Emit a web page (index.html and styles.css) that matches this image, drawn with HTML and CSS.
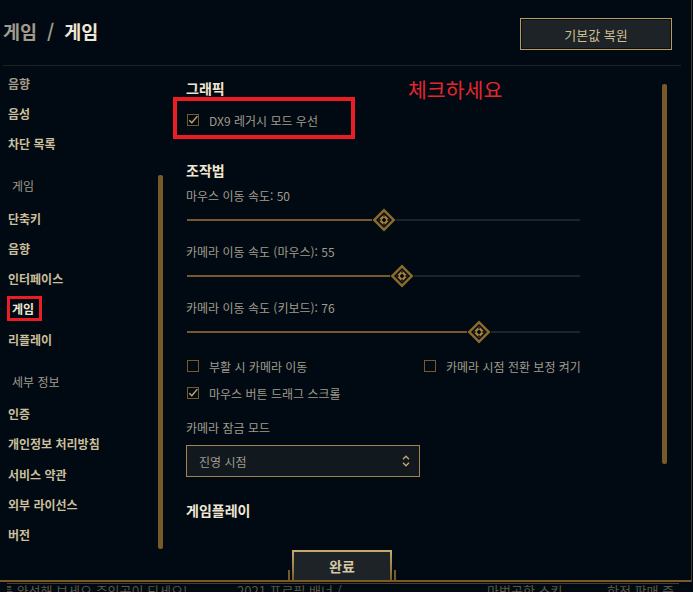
FILE: index.html
```html
<!DOCTYPE html>
<html lang="ko">
<head>
<meta charset="utf-8">
<title>게임 설정</title>
<link rel="stylesheet" href="styles.css">
</head>
<body>
<div class="app">
  <header class="top">
    <h1 class="title"><span class="crumb">게임</span><span class="sep">/</span><span class="cur">게임</span></h1>
    <button class="btn-reset">기본값 복원</button>
  </header>
  <div class="main">
    <aside class="side">
      <nav class="nav">
        <div class="nav-item dim">음향</div>
        <div class="nav-item">음성</div>
        <div class="nav-item">차단 목록</div>
        <div class="nav-head">게임</div>
        <div class="nav-item">단축키</div>
        <div class="nav-item">음향</div>
        <div class="nav-item">인터페이스</div>
        <div class="nav-item"><span class="active-mark">게임</span></div>
        <div class="nav-item">리플레이</div>
        <div class="nav-head">세부 정보</div>
        <div class="nav-item">인증</div>
        <div class="nav-item">개인정보 처리방침</div>
        <div class="nav-item">서비스 약관</div>
        <div class="nav-item">외부 라이선스</div>
        <div class="nav-item">버전</div>
      </nav>
      <div class="side-thumb"></div>
    </aside>
    <section class="content">
      <div class="panel">
        <h2 class="h2 first">그래픽</h2>
        <span class="note">체크하세요</span>
        <div class="check-row dx9">
          <label class="check"><span class="box on"><svg viewBox="0 0 12 12" width="12" height="12"><path d="M2.3 6.2 L4.8 8.7 L10.4 2.1" fill="none" stroke="#c8aa6e" stroke-width="1.4"/></svg></span>DX9 레거시 모드 우선</label>
          <span class="note-box"></span>
        </div>

        <h2 class="h2 ctrl">조작법</h2>
        <div class="label first-label">마우스 이동 속도: 50</div>
        <div class="slider" style="--v:50">
          <span class="fill"></span>
          <svg class="knob" viewBox="0 0 24 24" width="24" height="24"><polygon points="12,0.5 23.5,12 12,23.5 0.5,12" fill="#8c6a2c"/><polygon points="12,4 20,12 12,20 4,12" fill="#010a13"/><polygon points="12,6.3 17.7,12 12,17.7 6.3,12" fill="#a8823c"/><polygon points="12,9.6 14.4,12 12,14.4 9.6,12" fill="#010a13"/><circle cx="12" cy="7.8" r="0.9" fill="#010a13"/><circle cx="16.2" cy="12" r="0.9" fill="#010a13"/><circle cx="12" cy="16.2" r="0.9" fill="#010a13"/><circle cx="7.8" cy="12" r="0.9" fill="#010a13"/></svg>
          <span class="rest"></span>
        </div>
        <div class="label">카메라 이동 속도 (마우스): 55</div>
        <div class="slider" style="--v:55">
          <span class="fill"></span>
          <svg class="knob" viewBox="0 0 24 24" width="24" height="24"><polygon points="12,0.5 23.5,12 12,23.5 0.5,12" fill="#8c6a2c"/><polygon points="12,4 20,12 12,20 4,12" fill="#010a13"/><polygon points="12,6.3 17.7,12 12,17.7 6.3,12" fill="#a8823c"/><polygon points="12,9.6 14.4,12 12,14.4 9.6,12" fill="#010a13"/><circle cx="12" cy="7.8" r="0.9" fill="#010a13"/><circle cx="16.2" cy="12" r="0.9" fill="#010a13"/><circle cx="12" cy="16.2" r="0.9" fill="#010a13"/><circle cx="7.8" cy="12" r="0.9" fill="#010a13"/></svg>
          <span class="rest"></span>
        </div>
        <div class="label">카메라 이동 속도 (키보드): 76</div>
        <div class="slider" style="--v:76">
          <span class="fill"></span>
          <svg class="knob" viewBox="0 0 24 24" width="24" height="24"><polygon points="12,0.5 23.5,12 12,23.5 0.5,12" fill="#8c6a2c"/><polygon points="12,4 20,12 12,20 4,12" fill="#010a13"/><polygon points="12,6.3 17.7,12 12,17.7 6.3,12" fill="#a8823c"/><polygon points="12,9.6 14.4,12 12,14.4 9.6,12" fill="#010a13"/><circle cx="12" cy="7.8" r="0.9" fill="#010a13"/><circle cx="16.2" cy="12" r="0.9" fill="#010a13"/><circle cx="12" cy="16.2" r="0.9" fill="#010a13"/><circle cx="7.8" cy="12" r="0.9" fill="#010a13"/></svg>
          <span class="rest"></span>
        </div>

        <div class="check-grid">
          <label class="check"><span class="box"></span>부활 시 카메라 이동</label>
          <label class="check"><span class="box"></span>카메라 시점 전환 보정 켜기</label>
        </div>
        <div class="check-row second">
          <label class="check"><span class="box on"><svg viewBox="0 0 12 12" width="12" height="12"><path d="M2.3 6.2 L4.8 8.7 L10.4 2.1" fill="none" stroke="#c8aa6e" stroke-width="1.4"/></svg></span>마우스 버튼 드래그 스크롤</label>
        </div>

        <div class="label lock-label">카메라 잠금 모드</div>
        <div class="select">
          <span>진영 시점</span>
          <svg viewBox="0 0 8 12" width="8" height="12"><path d="M1 4.2 L4 1.2 L7 4.2 M1 7.8 L4 10.8 L7 7.8" fill="none" stroke="#c8aa6e" stroke-width="1.3"/></svg>
        </div>

        <h2 class="h2 gameplay">게임플레이</h2>
      </div>
      <div class="content-thumb"></div>
    </section>
  </div>
  <footer class="foot">
    <div class="done-wrap"><button class="btn-done">완료</button></div>
  </footer>
</div>
<div class="behind">
  <span class="b1">를 완성해 보세요 주인공이 되세요!</span>
  <span class="b2">2021 프로필 배너 /</span>
  <span class="b3">마법공학 스킨</span>
  <span class="b4">한정 판매 중</span>
</div>
</body>
</html>
```

FILE: styles.css
```css
* { box-sizing: border-box; }
html, body { margin: 0; padding: 0; }
body {
  background: #010a13;
  width: 693px;
  height: 592px;
  overflow: hidden;
  font-family: "Noto Sans CJK KR", "Noto Sans", sans-serif;
}

.app {
  width: 692px;
  height: 582px;
  border-right: 1px solid #4a3a1a;
  border-bottom: 2px solid #785a28;
  display: flex;
  flex-direction: column;
}

/* header */
.top {
  flex: none;
  height: 66px;
  margin: 0 10px 0 3px;
  border-bottom: 1px solid #1e2328;
  display: flex;
  justify-content: space-between;
  align-items: flex-start;
}
.title {
  margin: 17px 0 0;
  display: flex;
  gap: 10px;
  font-size: 18.5px;
  line-height: 28px;
  font-weight: 700;
  color: #f0e6d2;
  white-space: nowrap;
}
.crumb, .sep { color: #a09b8c; }
.btn-reset {
  margin: 18px 9px 0 0;
  width: 152px;
  height: 32px;
  padding: 0;
  background: #1e2328;
  border: 1px solid #b89b60;
  box-shadow: inset 0 0 0 1px #0a0e12;
  color: #cdbe91;
  font: 400 13px "Noto Sans CJK KR", sans-serif;
}

/* main */
.main {
  flex: 1;
  display: flex;
  min-height: 0;
}
.side {
  flex: none;
  width: 170px;
  display: flex;
}
.nav {
  width: 158px;
  padding-top: 2px;
  display: flex;
  flex-direction: column;
}
.nav-item {
  height: 30.3px;
  display: flex;
  align-items: center;
  padding-left: 8px;
  font-size: 12px;
  font-weight: 700;
  color: #cbbf9c;
  white-space: nowrap;
}
.nav-item.dim { color: #a69e88; }
.nav-head {
  height: 30px;
  margin: 12px 0 2px;
  display: flex;
  align-items: center;
  padding-left: 12px;
  font-size: 12px;
  color: #a09b8c;
}
.active-mark {
  margin-left: -1px;
  height: 25px;
  display: inline-flex;
  align-items: center;
  border: 3px solid #ec1c24;
  padding: 0 5px 0 2px;
  color: #f0e6d2;
}
.side-thumb {
  flex: none;
  width: 5px;
  height: 374px;
  margin-top: 109px;
  background: #785a28;
  border-radius: 2px;
}

.content {
  flex: 1;
  display: flex;
  padding-right: 24px;
}
.panel {
  flex: 1;
  padding-left: 16px;
  position: relative;
}
.content-thumb {
  flex: none;
  width: 5px;
  height: 380px;
  margin-top: 18px;
  background: #785a28;
  border-radius: 2px;
}

.h2 {
  margin: 0;
  font-size: 14px;
  line-height: 20px;
  font-weight: 700;
  color: #f0e6d2;
}
.h2.first { margin-top: 12px; }
.h2.ctrl { margin-top: 30px; }
.h2.gameplay { margin-top: 23px; }

.note {
  position: absolute;
  left: 238px;
  top: 12px;
  font-size: 20.5px;
  line-height: 22px;
  color: #e3262d;
  font-weight: 400;
}

.check-row {
  display: flex;
  align-items: center;
  height: 20px;
  position: relative;
}
.check-row.dx9 { margin-top: 12px; }
.check-row.second { margin-top: 7px; }
.note-box {
  position: absolute;
  left: -13px;
  top: -13px;
  width: 182px;
  height: 42px;
  border: 4px solid #ec1c24;
}
.check {
  display: flex;
  align-items: center;
  gap: 10px;
  font-size: 12px;
  color: #a09b8c;
  white-space: nowrap;
}
.box {
  position: relative;
  flex: none;
  width: 12px;
  height: 12px;
  margin-left: 1px;
  border: 1px solid #785a28;
}
.box svg {
  position: absolute;
  left: -1px;
  top: -1px;
  overflow: visible;
}
.check-grid {
  margin-top: 12px;
  height: 20px;
  display: grid;
  grid-template-columns: 237px auto;
  align-items: center;
}

.label {
  margin-top: 10px;
  font-size: 12px;
  line-height: 20px;
  color: #a09b8c;
}
.label.first-label { margin-top: 6px; }
.label.lock-label { margin-top: 15px; }

.slider {
  width: 393px;
  height: 24px;
  margin: 2px 0 0 1px;
  display: flex;
  align-items: center;
}
.slider .fill {
  flex: none;
  width: calc((393px - 24px) * var(--v) / 100);
  height: 2px;
  background: #785a28;
}
.slider .knob { flex: none; display: block; }
.slider .rest {
  flex: 1;
  height: 2px;
  background: #1e2328;
}

.select {
  margin-top: 7px;
  width: 234px;
  height: 32px;
  border: 1px solid #9e8450;
  background: #11181e;
  display: flex;
  align-items: center;
  justify-content: space-between;
  padding: 0 9px 0 12px;
  font-size: 12px;
  color: #a09b8c;
}
.select svg { display: block; }

/* footer */
.foot {
  flex: none;
  height: 30px;
  display: flex;
  align-items: flex-end;
}
.done-wrap {
  position: relative;
  margin-left: 292px;
  margin-bottom: -2px;
}
.done-wrap::before,
.done-wrap::after {
  content: "";
  position: absolute;
  bottom: 2px;
  width: 2px;
  height: 10px;
  background: #785a28;
}
.done-wrap::before { left: -4px; }
.done-wrap::after { right: -4px; }
.btn-done {
  display: block;
  width: 100px;
  height: 32px;
  padding: 0;
  background: #1e2328;
  border: 2px solid #b0914f;
  border-image: linear-gradient(#c8aa6e, #785a28) 1;
  color: #d5c8a5;
  font: 700 14px "Noto Sans CJK KR", sans-serif;
}

/* background behind the dialog */
.behind {
  margin: 1px 0 0 7px;
  width: 672px;
  height: 9px;
  border-top: 1px solid #4f3e1c;
  overflow: hidden;
  display: flex;
  white-space: nowrap;
  font-size: 13px;
  line-height: 13px;
  color: #5e5645;
}
.b1 { margin-left: -6px; width: 236px; }
.b2 { width: 250px; }
.b3 { width: 120px; }
```
